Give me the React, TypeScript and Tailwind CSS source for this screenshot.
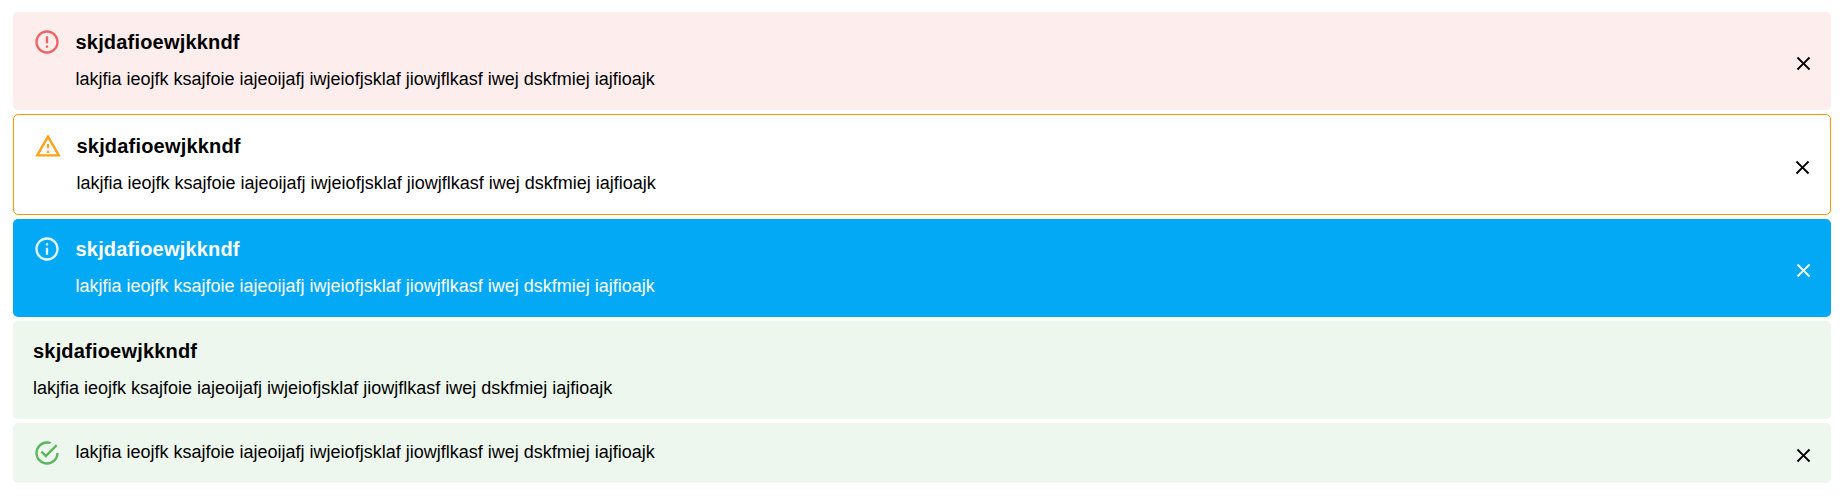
import React from "react";

const icons = {
  error:
    "M11 15h2v2h-2zm0-8h2v6h-2zm.99-5C6.47 2 2 6.48 2 12s4.47 10 9.99 10C17.52 22 22 17.52 22 12S17.52 2 11.99 2zM12 20c-4.42 0-8-3.58-8-8s3.58-8 8-8 8 3.58 8 8-3.58 8-8 8z",
  warning:
    "M12 5.99L19.53 19H4.47L12 5.99M12 2L1 21h22L12 2zm1 14h-2v2h2v-2zm0-6h-2v4h2v-4z",
  info: "M11,9H13V7H11M12,20C7.59,20 4,16.41 4,12C4,7.59 7.59,4 12,4C16.41,4 20,7.59 20,12C20,16.41 16.41,20 12,20M12,2A10,10 0 0,0 2,12A10,10 0 0,0 12,22A10,10 0 0,0 22,12A10,10 0 0,0 12,2M11,17H13V11H11V17Z",
  success:
    "M20,12A8,8 0 0,1 12,20A8,8 0 0,1 4,12A8,8 0 0,1 12,4C12.76,4 13.5,4.11 14.2,4.31L15.77,2.74C14.61,2.26 13.34,2 12,2A10,10 0 0,0 2,12A10,10 0 0,0 12,22A10,10 0 0,0 22,12M7.91,10.08L6.5,11.5L11,16L21,6L19.59,4.58L11,13.17L7.91,10.08Z",
  close:
    "M19 6.41L17.59 5 12 10.59 6.41 5 5 6.41 10.59 12 5 17.59 6.41 19 12 13.41 17.59 19 19 17.59 13.41 12z",
};

function Icon({ name, className }: { name: keyof typeof icons; className: string }) {
  return (
    <svg viewBox="0 0 24 24" fill="currentColor" className={className} aria-hidden="true">
      <path d={icons[name]} />
    </svg>
  );
}

type AlertProps = {
  className: string;
  icon?: "error" | "warning" | "info" | "success";
  iconClassName?: string;
  title?: string;
  closable?: boolean;
};

function Alert({ className, icon, iconClassName = "", title, closable }: AlertProps) {
  return (
    <div role="alert" className={`flex rounded-[5px] pl-5 pr-4 ${className}`}>
      {icon && (
        <div className={`mr-[14.5px] shrink-0 pt-4 opacity-90 ${iconClassName}`}>
          <Icon name={icon} className="size-[28px]" />
        </div>
      )}
      <div className={`min-w-0 flex-1 ${title ? "pt-[17px]" : "pt-4"}`}>
        {title && (
          <div className="mb-[11px] text-[20px] leading-[26px] font-bold tracking-[0.19px]">{title}</div>
        )}
        <div className="text-[18px] leading-[26px]">
          lakjfia ieojfk ksajfoie iajeoijafj iwjeiofjsklaf jiowjflkasf iwej dskfmiej iajfioajk
        </div>
      </div>
      {closable && (
        <button type="button" aria-label="Close" className="flex items-center pt-[5px]">
          <Icon name="close" className="size-[23px]" />
        </button>
      )}
    </div>
  );
}

export default function App() {
  const title = "skjdafioewjkkndf";
  return (
    <main className="flex flex-col gap-1 bg-white pt-3 pr-3 pl-[13px] font-['Liberation_Sans',Arial,sans-serif] text-black">
      <Alert className="h-[98px] bg-[#fdeded]" icon="error" iconClassName="text-[#ef5350]" title={title} closable />
      <Alert className="h-[101px] border border-[#ff9800] py-px" icon="warning" iconClassName="text-[#ff9800]" title={title} closable />
      <Alert className="h-[98px] bg-[#03a9f4] text-white" icon="info" title={title} closable />
      <Alert className="h-[98px] bg-[#edf7ed]" title={title} />
      <Alert className="h-[60px] bg-[#edf7ed]" icon="success" iconClassName="text-[#4caf50]" closable />
    </main>
  );
}
